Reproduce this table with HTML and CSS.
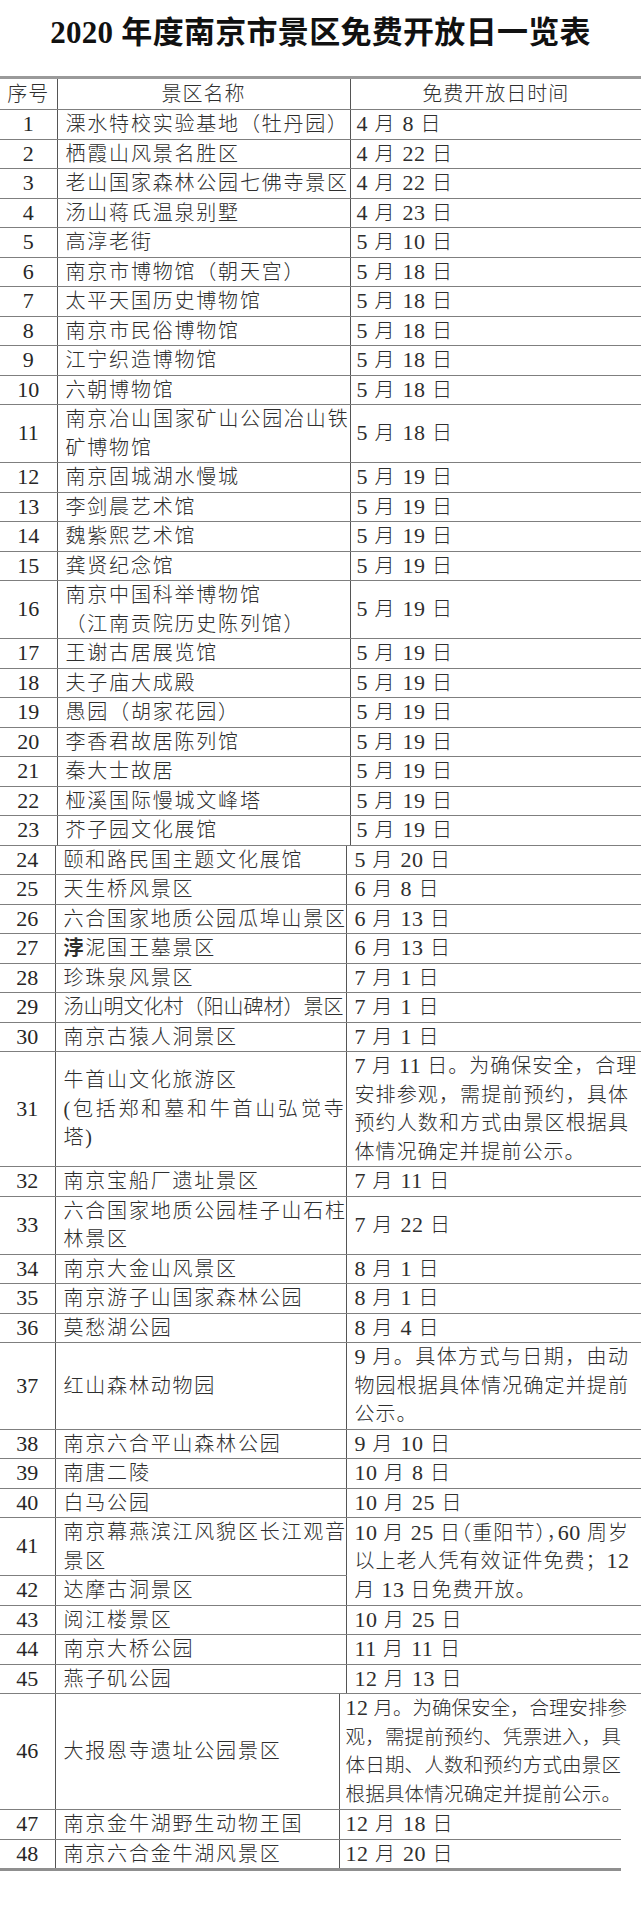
FILE: index.html
```html
<!DOCTYPE html>
<html lang="zh-CN">
<head>
<meta charset="utf-8">
<title>2020 年度南京市景区免费开放日一览表</title>
<link rel="stylesheet" href="styles.css">
</head>
<body>
<main class="page">
<h1 class="title">2020 年度南京市景区免费开放日一览表</h1>

<table class="sched sched-a">
<colgroup><col class="a-no"><col class="a-name"><col></colgroup>
<thead>
<tr><th>序号</th><th>景区名称</th><th>免费开放日时间</th></tr>
</thead>
<tbody>
<tr><td class="no">1</td><td class="name">溧水特校实验基地（牡丹园）</td><td class="date"><span class="n">4</span> 月 <span class="n">8</span> 日</td></tr>
<tr><td class="no">2</td><td class="name">栖霞山风景名胜区</td><td class="date"><span class="n">4</span> 月 <span class="n">22</span> 日</td></tr>
<tr><td class="no">3</td><td class="name">老山国家森林公园七佛寺景区</td><td class="date"><span class="n">4</span> 月 <span class="n">22</span> 日</td></tr>
<tr><td class="no">4</td><td class="name">汤山蒋氏温泉别墅</td><td class="date"><span class="n">4</span> 月 <span class="n">23</span> 日</td></tr>
<tr><td class="no">5</td><td class="name">高淳老街</td><td class="date"><span class="n">5</span> 月 <span class="n">10</span> 日</td></tr>
<tr><td class="no">6</td><td class="name">南京市博物馆（朝天宫）</td><td class="date"><span class="n">5</span> 月 <span class="n">18</span> 日</td></tr>
<tr><td class="no">7</td><td class="name">太平天国历史博物馆</td><td class="date"><span class="n">5</span> 月 <span class="n">18</span> 日</td></tr>
<tr><td class="no">8</td><td class="name">南京市民俗博物馆</td><td class="date"><span class="n">5</span> 月 <span class="n">18</span> 日</td></tr>
<tr><td class="no">9</td><td class="name">江宁织造博物馆</td><td class="date"><span class="n">5</span> 月 <span class="n">18</span> 日</td></tr>
<tr><td class="no">10</td><td class="name">六朝博物馆</td><td class="date"><span class="n">5</span> 月 <span class="n">18</span> 日</td></tr>
<tr><td class="no">11</td><td class="name"><span class="ln full">南京冶山国家矿山公园冶山铁</span><span class="ln">矿博物馆</span></td><td class="date"><span class="n">5</span> 月 <span class="n">18</span> 日</td></tr>
<tr><td class="no">12</td><td class="name">南京固城湖水慢城</td><td class="date"><span class="n">5</span> 月 <span class="n">19</span> 日</td></tr>
<tr><td class="no">13</td><td class="name">李剑晨艺术馆</td><td class="date"><span class="n">5</span> 月 <span class="n">19</span> 日</td></tr>
<tr><td class="no">14</td><td class="name">魏紫熙艺术馆</td><td class="date"><span class="n">5</span> 月 <span class="n">19</span> 日</td></tr>
<tr><td class="no">15</td><td class="name">龚贤纪念馆</td><td class="date"><span class="n">5</span> 月 <span class="n">19</span> 日</td></tr>
<tr><td class="no">16</td><td class="name"><span class="ln">南京中国科举博物馆</span><span class="ln">（江南贡院历史陈列馆）</span></td><td class="date"><span class="n">5</span> 月 <span class="n">19</span> 日</td></tr>
<tr><td class="no">17</td><td class="name">王谢古居展览馆</td><td class="date"><span class="n">5</span> 月 <span class="n">19</span> 日</td></tr>
<tr><td class="no">18</td><td class="name">夫子庙大成殿</td><td class="date"><span class="n">5</span> 月 <span class="n">19</span> 日</td></tr>
<tr><td class="no">19</td><td class="name">愚园（胡家花园）</td><td class="date"><span class="n">5</span> 月 <span class="n">19</span> 日</td></tr>
<tr><td class="no">20</td><td class="name">李香君故居陈列馆</td><td class="date"><span class="n">5</span> 月 <span class="n">19</span> 日</td></tr>
<tr><td class="no">21</td><td class="name">秦大士故居</td><td class="date"><span class="n">5</span> 月 <span class="n">19</span> 日</td></tr>
<tr><td class="no">22</td><td class="name">桠溪国际慢城文峰塔</td><td class="date"><span class="n">5</span> 月 <span class="n">19</span> 日</td></tr>
<tr><td class="no">23</td><td class="name">芥子园文化展馆</td><td class="date"><span class="n">5</span> 月 <span class="n">19</span> 日</td></tr>
</tbody>
</table>

<table class="sched sched-b">
<colgroup><col class="b-no"><col class="b-name"><col></colgroup>
<tbody>
<tr><td class="no">24</td><td class="name">颐和路民国主题文化展馆</td><td class="date"><span class="n">5</span> 月 <span class="n">20</span> 日</td></tr>
<tr><td class="no">25</td><td class="name">天生桥风景区</td><td class="date"><span class="n">6</span> 月 <span class="n">8</span> 日</td></tr>
<tr><td class="no">26</td><td class="name">六合国家地质公园瓜埠山景区</td><td class="date"><span class="n">6</span> 月 <span class="n">13</span> 日</td></tr>
<tr><td class="no">27</td><td class="name"><span class="odd">浡</span>泥国王墓景区</td><td class="date"><span class="n">6</span> 月 <span class="n">13</span> 日</td></tr>
<tr><td class="no">28</td><td class="name">珍珠泉风景区</td><td class="date"><span class="n">7</span> 月 <span class="n">1</span> 日</td></tr>
<tr><td class="no">29</td><td class="name tight">汤山明文化村（阳山碑材）景区</td><td class="date"><span class="n">7</span> 月 <span class="n">1</span> 日</td></tr>
<tr><td class="no">30</td><td class="name">南京古猿人洞景区</td><td class="date"><span class="n">7</span> 月 <span class="n">1</span> 日</td></tr>
<tr><td class="no">31</td><td class="name"><span class="ln">牛首山文化旅游区</span><span class="ln full">(包括郑和墓和牛首山弘觉寺</span><span class="ln">塔)</span></td><td class="date note"><span class="ln full"><span class="n">7</span> 月 <span class="n">11</span> 日。为确保安全，合理</span><span class="ln full">安排参观，需提前预约，具体</span><span class="ln full">预约人数和方式由景区根据具</span><span class="ln">体情况确定并提前公示。</span></td></tr>
<tr><td class="no">32</td><td class="name">南京宝船厂遗址景区</td><td class="date"><span class="n">7</span> 月 <span class="n">11</span> 日</td></tr>
<tr><td class="no">33</td><td class="name"><span class="ln full">六合国家地质公园桂子山石柱</span><span class="ln">林景区</span></td><td class="date"><span class="n">7</span> 月 <span class="n">22</span> 日</td></tr>
<tr><td class="no">34</td><td class="name">南京大金山风景区</td><td class="date"><span class="n">8</span> 月 <span class="n">1</span> 日</td></tr>
<tr><td class="no">35</td><td class="name">南京游子山国家森林公园</td><td class="date"><span class="n">8</span> 月 <span class="n">1</span> 日</td></tr>
<tr><td class="no">36</td><td class="name">莫愁湖公园</td><td class="date"><span class="n">8</span> 月 <span class="n">4</span> 日</td></tr>
<tr><td class="no">37</td><td class="name">红山森林动物园</td><td class="date note"><span class="ln full"><span class="n">9</span> 月。具体方式与日期，由动</span><span class="ln full">物园根据具体情况确定并提前</span><span class="ln">公示。</span></td></tr>
<tr><td class="no">38</td><td class="name">南京六合平山森林公园</td><td class="date"><span class="n">9</span> 月 <span class="n">10</span> 日</td></tr>
<tr><td class="no">39</td><td class="name">南唐二陵</td><td class="date"><span class="n">10</span> 月 <span class="n">8</span> 日</td></tr>
<tr><td class="no">40</td><td class="name">白马公园</td><td class="date"><span class="n">10</span> 月 <span class="n">25</span> 日</td></tr>
<tr><td class="no">41</td><td class="name"><span class="ln full">南京幕燕滨江风貌区长江观音</span><span class="ln">景区</span></td><td class="date note" rowspan="2"><span class="ln full halt"><span class="n">10</span> 月 <span class="n">25</span> 日（重阳节），<span class="n">60</span> 周岁</span><span class="ln full">以上老人凭有效证件免费；<span class="n">12</span></span><span class="ln">月 <span class="n">13</span> 日免费开放。</span></td></tr>
<tr><td class="no">42</td><td class="name">达摩古洞景区</td></tr>
<tr><td class="no">43</td><td class="name">阅江楼景区</td><td class="date"><span class="n">10</span> 月 <span class="n">25</span> 日</td></tr>
<tr><td class="no">44</td><td class="name">南京大桥公园</td><td class="date"><span class="n">11</span> 月 <span class="n">11</span> 日</td></tr>
<tr><td class="no">45</td><td class="name">燕子矶公园</td><td class="date"><span class="n">12</span> 月 <span class="n">13</span> 日</td></tr>
</tbody>
</table>

<table class="sched sched-c">
<colgroup><col class="c-no"><col class="c-name"><col></colgroup>
<tbody>
<tr><td class="no">46</td><td class="name">大报恩寺遗址公园景区</td><td class="date note dense"><span class="ln full"><span class="n">12</span> 月。为确保安全，合理安排参</span><span class="ln full">观，需提前预约、凭票进入，具</span><span class="ln full">体日期、人数和预约方式由景区</span><span class="ln full">根据具体情况确定并提前公示。</span></td></tr>
<tr><td class="no">47</td><td class="name">南京金牛湖野生动物王国</td><td class="date"><span class="n">12</span> 月 <span class="n">18</span> 日</td></tr>
<tr><td class="no">48</td><td class="name">南京六合金牛湖风景区</td><td class="date"><span class="n">12</span> 月 <span class="n">20</span> 日</td></tr>
</tbody>
</table>
</main>
</body>
</html>
```
FILE: styles.css
```css
html, body {
  margin: 0;
  padding: 0;
  background: #ffffff;
}

body {
  color: #2e2e2e;
  font-family: "Liberation Serif", "Noto Sans CJK SC", serif;
}

.page {
  width: 641px;
}

.title {
  margin: 0;
  height: 76px;
  line-height: 66px;
  text-align: center;
  font-size: 31px;
  font-weight: 700;
  color: #111111;
  letter-spacing: 0.3px;
}

/* table segments (the printed sheet is assembled from three pieces) */
.sched {
  border-collapse: collapse;
  table-layout: fixed;
  font-size: 20px;
  font-weight: 300;
}

.sched-a { width: 641px; }
.sched-b { width: 641px; }
.sched-c { width: 621px; }

.a-no { width: 57px; }
.a-name { width: 293px; }
.b-no { width: 55px; }
.b-name { width: 291px; }
.c-no { width: 55px; }
.c-name { width: 284px; }

.sched th,
.sched td {
  padding: 0;
  line-height: 28.5px;
  vertical-align: middle;
  border-bottom: 1px solid #7f7f7f;
  border-left: 1px solid #555555;
  white-space: nowrap;
}

.sched th:first-child,
.sched td.no {
  border-left: none;
}

.sched thead th {
  border-top: 3px solid #9a9a9a;
  font-weight: 300;
  letter-spacing: 1px;
  text-align: center;
  height: 30px;
  line-height: 28px;
}

.sched-c tr:last-child td {
  border-bottom: 3px solid #8f8f8f;
}

td.no {
  text-align: center;
  font-size: 22px;
  font-weight: 400;
  color: #262626;
}

td.name {
  padding-left: 8px;
  letter-spacing: 1.8px;
}

td.name.tight {
  letter-spacing: 0;
}

td.date {
  padding-left: 6px;
  padding-right: 12px;
  letter-spacing: 1.5px;
}

.sched-b td.date {
  padding-left: 8px;
}

.sched-c td.date {
  padding-left: 6px;
  padding-right: 0;
}

td.date.note {
  letter-spacing: 1px;
}

td.date.dense {
  letter-spacing: 0;
  font-size: 19.5px;
}

.n {
  font-size: 22px;
  font-weight: 400;
  letter-spacing: 0.5px;
}

.ln {
  display: block;
  text-align: left;
}

.ln.full {
  text-align: justify;
  text-align-last: justify;
}

.halt {
  font-feature-settings: "halt" 1;
}

.odd {
  font-weight: 700;
}
```
